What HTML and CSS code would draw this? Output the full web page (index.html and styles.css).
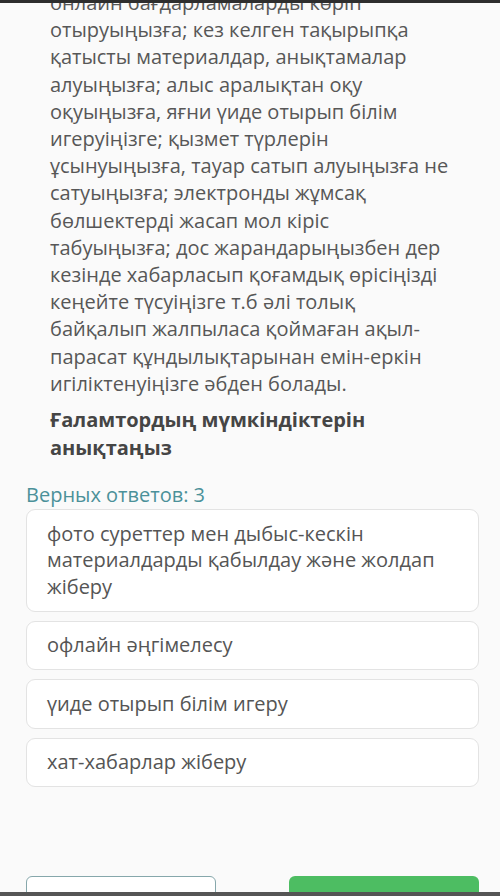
FILE: index.html
```html
<!DOCTYPE html>
<html lang="kk">
<head>
<meta charset="utf-8">
<title>Тапсырма</title>
<link rel="stylesheet" href="styles.css">
</head>
<body>
<div class="screen">
  <div class="topbar"></div>
  <main class="content">
    <p class="passage">онлайн бағдарламаларды көріп отыруыңызға; кез келген тақырыпқа қатысты материалдар, анықтамалар алуыңызға; алыс аралықтан оқу оқуыңызға, яғни үиде отырып білім игеруіңізге; қызмет түрлерін ұсынуыңызға, тауар сатып алуыңызға не сатуыңызға; электронды жұмсақ бөлшектерді жасап мол кіріс табуыңызға; дос жарандарыңызбен дер кезінде хабарласып қоғамдық өрісіңізді кеңейте түсуіңізге т.б әлі толық байқалып жалпыласа қоймаған ақыл-парасат құндылықтарынан емін-еркін игіліктенуіңізге әбден болады.</p>
    <h2 class="question">Ғаламтордың мүмкіндіктерін анықтаңыз</h2>
    <div class="hint">Верных ответов: 3</div>
    <ul class="answers">
      <li class="answer">фото суреттер мен дыбыс-кескін материалдарды қабылдау және жолдап жіберу</li>
      <li class="answer">офлайн әңгімелесу</li>
      <li class="answer">үиде отырып білім игеру</li>
      <li class="answer">хат-хабарлар жіберу</li>
    </ul>
    <div class="actions">
      <button class="btn btn-outline" type="button"></button>
      <button class="btn btn-green" type="button"></button>
    </div>
  </main>
  <div class="bottombar"></div>
</div>
</body>
</html>
```

FILE: styles.css
```css
html, body {
  margin: 0;
  padding: 0;
  background: #fafafa;
}

.screen {
  position: relative;
  width: 500px;
  height: 896px;
  overflow: hidden;
  font-family: "Open Sans", "Noto Sans", "Liberation Sans", sans-serif;
  color: #555;
}

.topbar {
  position: relative;
  z-index: 2;
  height: 3px;
  background: #2e2e2e;
}

.content {
  padding: 0 21px 0 26px;
}

.passage {
  margin: -14px 0 0 24px;
  width: 401px;
  font-size: 20px;
  line-height: 27.2px;
  color: #575757;
}

.question {
  margin: 9px 0 0 24px;
  font-size: 20px;
  line-height: 28px;
  font-weight: 700;
  color: #454545;
}

.hint {
  margin-top: 19px;
  font-size: 20px;
  line-height: 27px;
  color: #4b9199;
}

.answers {
  list-style: none;
  margin: 1px 0 0;
  padding: 0;
  display: flex;
  flex-direction: column;
  gap: 9px;
}

.answer {
  background: #fff;
  border: 1px solid #e3e3e3;
  border-radius: 9px;
  padding: 10.5px 20px;
  font-size: 20px;
  line-height: 26.5px;
  color: #555;
}

.actions {
  margin-top: 89px;
  display: flex;
  justify-content: space-between;
}

.btn {
  width: 190px;
  height: 48px;
  border-radius: 6px;
  padding: 0;
}

.btn-outline {
  background: #fff;
  border: 1.5px solid #86a7ab;
}

.btn-green {
  background: #4dbd62;
  border: none;
}

.bottombar {
  position: absolute;
  left: 0;
  right: 0;
  bottom: 0;
  height: 4px;
  background: #555;
}
```
